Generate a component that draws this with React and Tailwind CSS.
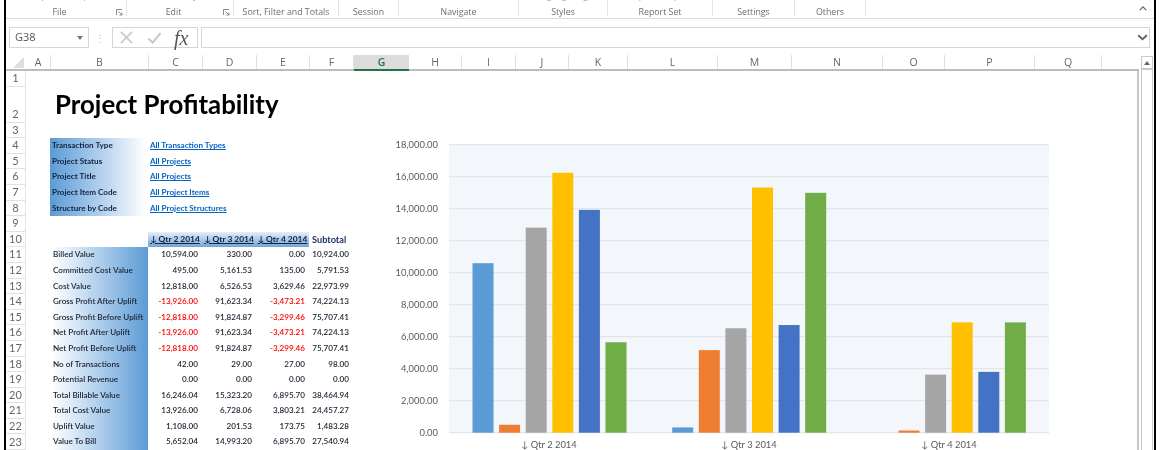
const GROUPS = [
  { w: 'w-[121px]', label: 'File', top: 'Report      Report', launcher: true },
  { w: 'w-[107px]', label: 'Edit', top: 'Pivot      Layout', launcher: true },
  { w: 'w-[105px]', label: 'Sort, Filter and Totals', top: 'Sort   Sort' },
  { w: 'w-[60px]', label: 'Session' },
  { w: 'w-[120px]', label: 'Navigate' },
  { w: 'w-[89px]', label: 'Styles', top: 'Highlighting' },
  { w: 'w-[105px]', label: 'Report Set', top: 'Report   Report' },
  { w: 'w-[82px]', label: 'Settings' },
  { w: 'w-[71px]', label: 'Others' },
];

const COLUMNS = [
  { name: 'A', w: 'w-[25px]' },
  { name: 'B', w: 'w-[98px]' },
  { name: 'C', w: 'w-[54px]' },
  { name: 'D', w: 'w-[54px]' },
  { name: 'E', w: 'w-[53px]' },
  { name: 'F', w: 'w-[44px]' },
  { name: 'G', w: 'w-[55px]', active: true },
  { name: 'H', w: 'w-[53px]' },
  { name: 'I', w: 'w-[54px]' },
  { name: 'J', w: 'w-[53px]' },
  { name: 'K', w: 'w-[59px]' },
  { name: 'L', w: 'w-[90px]' },
  { name: 'M', w: 'w-[74px]' },
  { name: 'N', w: 'w-[91px]' },
  { name: 'O', w: 'w-[62px]' },
  { name: 'P', w: 'w-[90px]' },
  { name: 'Q', w: 'w-[67px]' },
];

const FILTERS = [
  ['Transaction Type', 'All Transaction Types'],
  ['Project Status', 'All Projects'],
  ['Project Title', 'All Projects'],
  ['Project Item Code', 'All Project Items'],
  ['Structure by Code', 'All Project Structures'],
];

const ROWS = [
  ['Billed Value', '10,594.00', '330.00', '0.00', '10,924.00'],
  ['Committed Cost Value', '495.00', '5,161.53', '135.00', '5,791.53'],
  ['Cost Value', '12,818.00', '6,526.53', '3,629.46', '22,973.99'],
  ['Gross Profit After Uplift', '-13,926.00', '91,623.34', '-3,473.21', '74,224.13'],
  ['Gross Profit Before Uplift', '-12,818.00', '91,824.87', '-3,299.46', '75,707.41'],
  ['Net Profit After Uplift', '-13,926.00', '91,623.34', '-3,473.21', '74,224.13'],
  ['Net Profit Before Uplift', '-12,818.00', '91,824.87', '-3,299.46', '75,707.41'],
  ['No of Transactions', '42.00', '29.00', '27.00', '98.00'],
  ['Potential Revenue', '0.00', '0.00', '0.00', '0.00'],
  ['Total Billable Value', '16,246.04', '15,323.20', '6,895.70', '38,464.94'],
  ['Total Cost Value', '13,926.00', '6,728.06', '3,803.21', '24,457.27'],
  ['Uplift Value', '1,108.00', '201.53', '173.75', '1,483.28'],
  ['Value To Bill', '5,652.04', '14,993.20', '6,895.70', '27,540.94'],
];

const BAR_COLORS = ['#5b9bd5', '#ed7d31', '#a5a5a5', '#ffc000', '#4472c4', '#70ad47'];

const CHART_DATA = [
  { label: 'Qtr 2 2014', values: [10594, 495, 12818, 16246.04, 13926, 5652.04] },
  { label: 'Qtr 3 2014', values: [330, 5161.53, 6526.53, 15323.2, 6728.06, 14993.2] },
  { label: 'Qtr 4 2014', values: [0, 135, 3629.46, 6895.7, 3803.21, 6895.7] },
];

const TICKS = [0, 2000, 4000, 6000, 8000, 10000, 12000, 14000, 16000, 18000];

function RibbonGroup({ group }) {
  return (
    <div className={`${group.w} relative h-[16px] flex-shrink-0 border-r border-[#e2e2e2]`}>
      {group.top && (
        <div className="absolute -top-[11px] inset-x-0 text-center whitespace-pre text-[9px] leading-[13px] text-[#9a9a9a]">
          {group.top}
        </div>
      )}
      <div className={`pt-[5px] text-center text-[8.8px] leading-[14px] whitespace-nowrap text-[#6e6e6e] ${group.launcher ? 'pr-[13px]' : ''}`}>
        {group.label}
      </div>
      {group.launcher && (
        <svg viewBox="0 0 7 7" className="absolute right-[3px] top-[9px] w-[7px] h-[7px]" fill="none" stroke="#8a8a8a">
          <path d="M0.5 6V0.5H6" />
          <path d="M2.5 2.5L6 6M6 3.5V6H3.5" />
        </svg>
      )}
    </div>
  );
}

function FormulaBar() {
  return (
    <div className="flex items-center h-[21px] mt-[8px] pl-[3px] pr-[4px]">
      <div className="w-[80px] h-[21px] flex items-center justify-between px-[5px] border border-[#d6d6d6] text-[11px] text-[#555]">
        G38
        <svg viewBox="0 0 6 4" className="w-[6px] h-[4px]" fill="#777"><path d="M0 0h6L3 4z" /></svg>
      </div>
      <div className="w-[23px] text-center text-[10px] leading-[10px] text-[#b5b5b5] tracking-widest">⋮</div>
      <div className="w-[86px] h-[21px] flex items-center border border-[#d6d6d6] pl-[6px]">
        <svg viewBox="0 0 16 16" className="w-[15px] h-[15px]" fill="none" stroke="#c9c9c9" strokeWidth="1.8">
          <path d="M2 2l12 12M14 2L2 14" />
        </svg>
        <svg viewBox="0 0 16 16" className="w-[15px] h-[15px] ml-[13px]" fill="none" stroke="#c9c9c9" strokeWidth="2.2">
          <path d="M1.5 9l4.5 4.5L14.5 3" />
        </svg>
        <span className="ml-[12px] font-['Liberation_Serif',serif] italic text-[20px] leading-[18px] text-[#555]">fx</span>
      </div>
      <div className="flex-1 h-[21px] ml-[3px] flex items-center justify-end pr-[1px] border border-[#d6d6d6]">
        <svg viewBox="0 0 12 8" className="w-[11px] h-[7px]" fill="none" stroke="#666" strokeWidth="2.2">
          <path d="M1 1.5l5 4.5 5-4.5" />
        </svg>
      </div>
    </div>
  );
}

function ColumnHeader() {
  return (
    <div className="flex w-[1133px] h-[16px] mt-[7px] border-b-2 border-[#bcbcbc]">
      <div className="w-[20px] relative flex-shrink-0">
        <div className="absolute right-[2px] bottom-[1px] w-0 h-0 border-l-[11px] border-l-transparent border-b-[11px] border-b-[#dedede]" />
      </div>
      {COLUMNS.map(col => (
        <div
          key={col.name}
          className={`${col.w} flex-shrink-0 text-center text-[10.5px] leading-[14px] ${
            col.active
              ? 'bg-[#dcdcdc] border-b-2 border-[#217346] -mb-[2px] font-semibold text-[#217346]'
              : 'border-r border-[#e0e0e0] text-[#666]'
          }`}
        >
          {col.name}
        </div>
      ))}
    </div>
  );
}

function RowNumber({ n, h, low }) {
  return (
    <div
      className={`${h} w-[20px] flex-shrink-0 flex justify-center border-b border-r border-[#e2e2e2] text-[11px] text-[#666] ${
        low ? 'items-end pb-[2px] leading-[13px]' : 'items-center'
      }`}
    >
      {n}
    </div>
  );
}

function SheetRow({ n, h = 'h-[15.6px]', low, children }) {
  return (
    <div className="flex">
      <RowNumber n={n} h={h} low={low} />
      <div className="flex-1 min-w-0 flex items-center text-[8.1px] leading-[15.6px] font-semibold text-[#1c2230]">
        {children}
      </div>
    </div>
  );
}

function NumberCell({ value, w }) {
  return (
    <div className={`${w} flex-shrink-0 pr-[4px] text-right ${value.startsWith('-') ? 'text-[#ff0000]' : ''}`}>
      {value}
    </div>
  );
}

function QtrHeader({ label, w }) {
  return (
    <div className={`${w} h-full flex-shrink-0 bg-gradient-to-b from-[#e6eff8] to-[#6fa5d8] text-center text-[8.4px] font-bold text-[#10233f] underline`}>
      ↓ {label}
    </div>
  );
}

function Chart() {
  const yOf = v => 432.7 - (v / 18000) * 288;
  return (
    <svg viewBox="390 135 670 315" className="absolute left-[384px] top-[64px] w-[670px] h-[315px] font-['Lato',sans-serif]">
      <rect x="449" y="145" width="600" height="288" fill="#f3f7fb" />
      {TICKS.map(t => (
        <g key={t}>
          <line x1="449" x2="1049" y1={yOf(t)} y2={yOf(t)} stroke="#e3e5e8" strokeWidth="1.2" />
          <text x="438" y={yOf(t) + 3.5} textAnchor="end" fontSize="9.4" fill="#595959">
            {t.toLocaleString('en-US', { minimumFractionDigits: 2 })}
          </text>
        </g>
      ))}
      {CHART_DATA.map((group, g) => (
        <g key={group.label}>
          {group.values.map((v, i) => (
            <rect
              key={i}
              x={472.5 + g * 199.7 + i * 26.6}
              y={yOf(v)}
              width="21"
              height={(v / 18000) * 288}
              fill={BAR_COLORS[i]}
            />
          ))}
          <text x={549 + g * 200} y="448" textAnchor="middle" fontSize="9.4" fill="#595959">
            ↓ {group.label}
          </text>
        </g>
      ))}
    </svg>
  );
}

export default function App() {
  return (
    <div className="w-[1160px] h-[450px] overflow-hidden bg-white px-[4px] font-['Lato',sans-serif] blur-[0.45px]">
      <div className="h-full border-x-2 border-black flex flex-col">
        {/* Ribbon, cut off at the top */}
        <div className="flex h-[19px] flex-shrink-0 border-b border-[#dcdcdc] font-['Open_Sans',sans-serif]">
          {GROUPS.map(g => <RibbonGroup key={g.label} group={g} />)}
          <div className="flex-1 flex items-center justify-end pr-[7px] pb-[1px]">
            <svg viewBox="0 0 10 6" className="w-[8px] h-[5px]" fill="none" stroke="#666" strokeWidth="1.6">
              <path d="M1 5l4-4 4 4" />
            </svg>
          </div>
        </div>

        <div className="font-['Open_Sans',sans-serif]">
          <FormulaBar />
          <ColumnHeader />
        </div>

        {/* Worksheet */}
        <div className="relative flex-1 min-h-0 flex">
          <div className="w-[1133px] flex-shrink-0 border-r-2 border-[#c6c6c6] overflow-hidden">
            <SheetRow n={1} />
            <SheetRow n={2} h="h-[36px]" low>
              <div className="pl-[29px] -mt-[2px] font-bold text-[25.8px] leading-[30px] whitespace-nowrap text-black">Project Profitability</div>
            </SheetRow>
            <SheetRow n={3} />

            <div className="relative">
              <div className="absolute left-[44px] inset-y-0 w-[96px] bg-gradient-to-r from-[#5b9bd5] to-white" />
              {FILTERS.map(([label, link], i) => (
                <SheetRow key={label} n={i + 4}>
                  <div className="relative pl-[26px] w-[122px] flex-shrink-0 font-bold text-[#10233f]">{label}</div>
                  <div className="relative pl-[2px] font-bold text-[#0563c1] underline">{link}</div>
                </SheetRow>
              ))}
            </div>

            <SheetRow n={9} />
            <SheetRow n={10}>
              <div className="w-[122px] flex-shrink-0" />
              <QtrHeader label="Qtr 2 2014" w="w-[54px]" />
              <QtrHeader label="Qtr 3 2014" w="w-[54px]" />
              <QtrHeader label="Qtr 4 2014" w="w-[53px]" />
              <div className="pl-[3px] text-[9.2px] font-bold text-[#1f2f6b]">Subtotal</div>
            </SheetRow>

            <div className="relative">
              <div className="absolute left-[46px] inset-y-0 w-[96px] bg-gradient-to-r from-white to-[#5b9bd5]" />
              {ROWS.map((row, i) => (
                <SheetRow key={row[0]} n={i + 11}>
                  <div className="relative pl-[27px] w-[122px] flex-shrink-0 whitespace-nowrap">{row[0]}</div>
                  <NumberCell value={row[1]} w="w-[54px]" />
                  <NumberCell value={row[2]} w="w-[54px]" />
                  <NumberCell value={row[3]} w="w-[53px]" />
                  <NumberCell value={row[4]} w="w-[44px]" />
                </SheetRow>
              ))}
            </div>
          </div>

          {/* Vertical scroll bar */}
          <div className="w-[12px] ml-[2px] -mt-[15px] flex-shrink-0 border-x border-[#c9c9c9] bg-white">
            <div className="h-[14px] flex items-center justify-center border-t border-b-2 border-[#c9c9c9]">
              <div className="w-0 h-0 border-x-[3px] border-x-transparent border-b-[4px] border-b-[#666]" />
            </div>
          </div>

          <Chart />
        </div>
      </div>
    </div>
  );
}
